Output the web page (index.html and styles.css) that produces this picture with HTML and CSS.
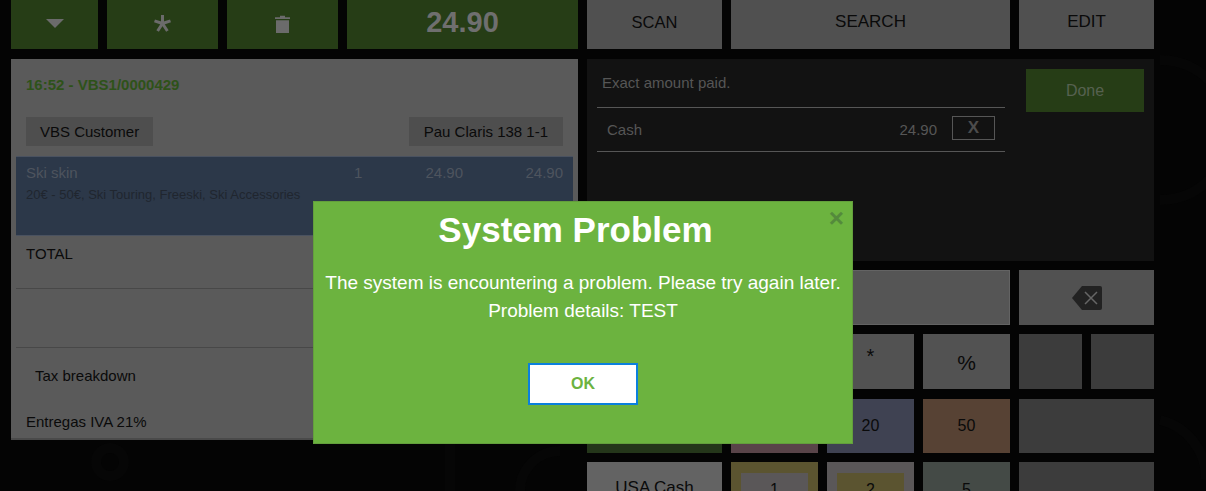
FILE: index.html
```html
<!DOCTYPE html>
<html lang="en">
<head>
<meta charset="utf-8">
<title>Point of sale</title>
<link rel="stylesheet" href="styles.css">
</head>
<body>
<svg class="watermark" viewBox="0 0 1206 491" aria-hidden="true">
  <g fill="none" stroke="#060606" stroke-width="10">
    <circle cx="110" cy="462" r="14"/>
    <path d="M1160 60a70 70 0 0 1 0 140"/>
    <path d="M1160 420a60 60 0 0 1 46 60"/>
    <path d="M450 491v-60h60M520 491a40 40 0 0 1 40-40"/>
  </g>
</svg>
<div class="app">
  <section class="col">
    <div class="toolbar toolbar-left">
      <button class="btn green"><svg class="icon" width="18" height="9" viewBox="0 0 18 9"><path d="M0 0h18L9 9z" fill="#6b6b6b"/></svg></button>
      <button class="btn green"><svg class="icon" width="17" height="17" viewBox="0 0 17 17"><path d="M8.5 0v8.5M.5 5.8l8 2.7M16.5 5.8l-8 2.7M3.6 16l4.9-7.5M13.4 16L8.5 8.5" stroke="#6b6b6b" stroke-width="3" fill="none"/></svg></button>
      <button class="btn green"><svg class="icon" width="15" height="18" viewBox="0 0 15 18"><path d="M0 2.2h5V.8h5v1.4h5V4H0zM1 5.2h13V18H1z" fill="#6b6b6b"/></svg></button>
      <button class="btn green total-btn">24.90</button>
    </div>
    <div class="receipt">
      <div class="receipt-head">16:52 - VBS1/0000429</div>
      <div class="customers">
        <button class="chip">VBS Customer</button>
        <button class="chip chip-low">Pau Claris 138 1-1</button>
      </div>
      <div class="line-item">
        <div class="line-main"><span class="li-name">Ski skin</span><span class="li-qty">1</span><span class="li-price">24.90</span><span class="li-sum">24.90</span></div>
        <div class="line-desc">20€ - 50€, Ski Touring, Freeski, Ski Accessories</div>
      </div>
      <div class="row-total">TOTAL</div>
      <div class="row-blank"></div>
      <div class="row-tax-title">Tax breakdown</div>
      <div class="row-tax">Entregas IVA 21%</div>
    </div>
  </section>
  <section class="col">
    <div class="toolbar toolbar-right">
      <button class="btn gray scan">SCAN</button>
      <button class="btn gray">SEARCH</button>
      <button class="btn gray">EDIT</button>
    </div>
    <div class="payment">
      <div class="pay-list">
        <div class="pay-status">Exact amount paid.</div>
        <div class="pay-line"><span class="pay-name">Cash</span><span class="pay-amount">24.90</span><button class="pay-remove">X</button></div>
      </div>
      <button class="done">Done</button>
    </div>
    <div class="keypad">
      <div class="key green-key k-first"></div>
      <div class="key display"></div>
      <div class="key back"><svg width="30" height="24" viewBox="0 0 30 24"><path d="M10 0h18a2 2 0 0 1 2 2v20a2 2 0 0 1-2 2H10L0 12z" fill="#222"/><path d="M13 6l12 12M25 6L13 18" stroke="#666" stroke-width="1.5" fill="none"/></svg></div>
      <div class="key gray-key k-first"></div>
      <div class="key gray-key"></div>
      <div class="key gray-key"><span class="star">*</span></div>
      <div class="key gray-key pct">%</div>
      <div class="key dark-key"></div>
      <div class="key dark-key"></div>
      <div class="key green-key k-first r3"></div>
      <div class="key pink r3">10</div>
      <div class="key blue r3">20</div>
      <div class="key orange r3">50</div>
      <div class="key dark-key wide r3"></div>
      <div class="key usa k-first">USA Cash</div>
      <div class="key yellow"><span class="inner inner-gray">1</span></div>
      <div class="key taupe"><span class="inner inner-yellow">2</span></div>
      <div class="key sage"><span class="inner">5</span></div>
      <div class="key dark-key wide"></div>
    </div>
  </section>
</div>
<div class="dialog" role="dialog">
  <span class="dialog-close">×</span>
  <h1 class="dialog-title">System Problem</h1>
  <p class="dialog-text">The system is encountering a problem. Please try again later.</p>
  <p class="dialog-text">Problem details: TEST</p>
  <button class="dialog-ok">OK</button>
</div>
</body>
</html>
```
FILE: styles.css
```css
* { box-sizing: border-box; }
html, body { margin: 0; height: 491px; overflow: hidden; }
body { position: relative; background: #040404; font-family: "Liberation Sans", Arial, sans-serif; color: #0a0a0a; }
button { font-family: inherit; border: 0; padding: 0; margin: 0; color: inherit; }

.watermark { position: absolute; left: 0; top: 0; width: 1206px; height: 491px; }

.app { position: relative; display: grid; grid-template-columns: 567px 567px; column-gap: 9px; padding-left: 11px; }
.col { display: flex; flex-direction: column; min-width: 0; }

.toolbar { display: grid; column-gap: 9px; height: 49px; }
.toolbar-left { grid-template-columns: 87px 111px 111px 231px; }
.toolbar-right { grid-template-columns: 135px 279px 135px; }
.btn { display: flex; align-items: center; justify-content: center; font-size: 17px; }
.green { background: #263d16; color: #6b6b6b; }
.gray { background: #505050; padding-bottom: 6px; }
.scan { padding-bottom: 4px; font-size: 16.5px; }
.icon { margin-top: -2px; }
.total-btn { font-size: 29px; font-weight: 700; padding-bottom: 4px; color: #6f6f6f; }

.receipt { margin-top: 10px; height: 381px; background: #5a5a5a; overflow: hidden; font-size: 15px; border-bottom: 2px solid #4a4a4a; }
.receipt-head { height: 58px; padding: 17px 15px 0; font-size: 15px; line-height: 17px; font-weight: 700; color: #2e5219; }
.customers { display: flex; justify-content: space-between; align-items: flex-start; padding: 0 15px; height: 39px; }
.chip { height: 29px; padding: 0 14px; background: #4e4e4e; font-size: 15px; line-height: 22px; }
.chip-low { line-height: 29px; padding: 0 15px; }
.line-item { margin: 0 5px; height: 80px; padding: 7px 10px 0; background: #2c3849; border-top: 1px solid #4a5260; border-bottom: 1px solid #4a5260; color: #4e545e; }
.line-main { display: grid; grid-template-columns: 310px 40px 1fr 100px; line-height: 17px; }
.li-qty { padding-left: 18px; }
.li-price, .li-sum { text-align: right; }
.line-desc { margin-top: 5px; font-size: 13px; line-height: 17px; color: #20262f; }
.row-total { margin: 0 5px; height: 53px; padding: 9px 10px 0; line-height: 17px; border-bottom: 1px solid #484848; }
.row-blank { margin: 0 5px; height: 59px; border-bottom: 1px solid #484848; }
.row-tax-title { padding: 19px 0 0 24px; height: 61px; line-height: 17px; }
.row-tax { padding: 4px 0 0 15px; line-height: 17px; }

.payment { margin-top: 10px; height: 202px; background: #121212; display: flex; padding: 10px 10px 0; color: #565656; }
.pay-list { width: 408px; font-size: 15px; }
.pay-status { height: 39px; padding: 4px 5px 0; line-height: 20px; border-bottom: 1px solid #565656; }
.pay-line { height: 44px; padding: 8px 10px 0; display: flex; align-items: flex-start; border-bottom: 1px solid #565656; line-height: 28px; }
.pay-name { flex: 1; }
.pay-remove { width: 43px; height: 24px; margin-left: 15px; background: transparent; border: 1px solid #565656; font-size: 17px; font-weight: 700; line-height: 20px; color: #4c4c4c; }
.done { margin-left: 21px; width: 118px; height: 43px; background: #263d16; color: #566150; font-size: 16px; }

.keypad { margin-top: 9px; display: grid; grid-template-columns: 135px 87px 87px 87px 63px 63px; grid-auto-rows: 55px; gap: 9px; }
.key { display: flex; align-items: center; justify-content: center; font-size: 16px; }
.display { grid-column: 2 / 5; background: #555; border: 1px solid #636363; }
.back { grid-column: 5 / 7; background: #515151; }
.gray-key { background: #525252; }
.dark-key { background: #3c3c3c; }
.wide { grid-column: 5 / 7; }
.green-key { background: #24361a; }
.r3 { margin-top: 1px; }
.pink { background: #594449; }
.blue { background: #3f4252; }
.orange { background: #574234; }
.usa { background: #636363; padding-bottom: 3px; font-size: 17px; }
.yellow { background: #5b5430; }
.taupe { background: #5a5758; }
.sage { background: #444a46; }
.inner { flex: 1; margin: 11px 10px 0; height: 44px; display: flex; align-items: flex-start; justify-content: center; padding-top: 8px; line-height: 18px; align-self: flex-start; }
.inner-gray { background: #5a5758; }
.inner-yellow { background: #5b5430; }
.star { margin-bottom: 10px; font-size: 20px; }
.pct { font-size: 21px; padding-top: 2px; }

.dialog { position: absolute; left: 313px; top: 201px; width: 540px; height: 243px; background: #6cb33f; border: 1px solid #639f3c; color: #fff; text-align: center; }
.dialog-close { position: absolute; right: 8px; top: 2px; font-size: 26px; line-height: 28px; font-weight: 700; color: #548a3c; }
.dialog-title { margin: 0; padding: 8px 15px 0 0; height: 67px; font-size: 35px; line-height: 40px; font-weight: 700; }
.dialog-text { margin: 0; font-size: 19px; line-height: 28px; }
.dialog-ok { display: block; margin: 38px auto 0; width: 110px; height: 42px; background: #fff; border: 2px solid #0b80dd; color: #6cb33f; font-size: 16px; font-weight: 700; }
```
